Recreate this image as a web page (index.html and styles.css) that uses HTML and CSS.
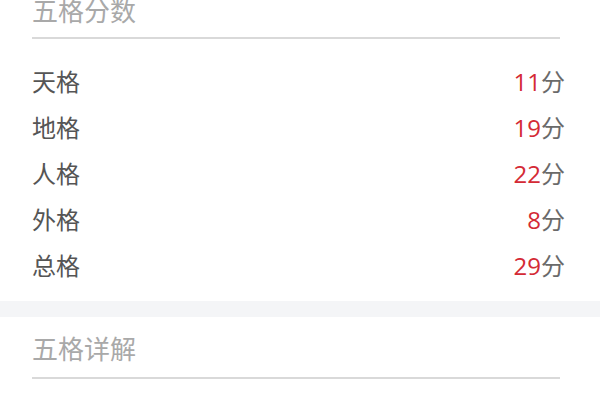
FILE: index.html
```html
<!DOCTYPE html>
<html lang="zh">
<head>
<meta charset="utf-8">
<link rel="stylesheet" href="styles.css">
</head>
<body>
<section class="card top">
  <h2 class="title">五格分数</h2>
  <div class="rows">
    <div class="row"><span class="label">天格</span><span class="val"><em>11</em>分</span></div>
    <div class="row"><span class="label">地格</span><span class="val"><em>19</em>分</span></div>
    <div class="row"><span class="label">人格</span><span class="val"><em>22</em>分</span></div>
    <div class="row"><span class="label">外格</span><span class="val"><em>8</em>分</span></div>
    <div class="row"><span class="label">总格</span><span class="val"><em>29</em>分</span></div>
  </div>
</section>
<div class="band"></div>
<section class="card">
  <h2 class="title">五格详解</h2>
</section>
</body>
</html>
```

FILE: styles.css
```css
html, body {
  margin: 0;
  padding: 0;
  background: #ffffff;
  font-family: "Noto Sans CJK SC", "Noto Sans", sans-serif;
  width: 600px;
  height: 400px;
  overflow: hidden;
}
.card {
  padding: 0 35px 0 32px;
}
.title {
  margin: 0 5px 0 0;
  font-size: 26px;
  font-weight: 400;
  color: #a9a9a9;
  line-height: 30px;
  padding-top: 16px;
  padding-bottom: 14px;
  border-bottom: 2px solid #d9d9d9;
}
.top .title {
  margin-top: -20px;
  padding-top: 15px;
  padding-bottom: 12px;
}
.rows {
  padding: 18px 0 14px;
}
.row {
  display: flex;
  justify-content: space-between;
  align-items: center;
  height: 46px;
  font-size: 24px;
}
.label {
  color: #555555;
}
.val {
  color: #6a6a6a;
}
.val em {
  font-style: normal;
  color: #d42a35;
  font-family: "Open Sans", "Noto Sans", sans-serif;
  font-size: 24px;
  font-weight: 500;
}
.band {
  height: 16px;
  background: #f4f5f7;
}
```
